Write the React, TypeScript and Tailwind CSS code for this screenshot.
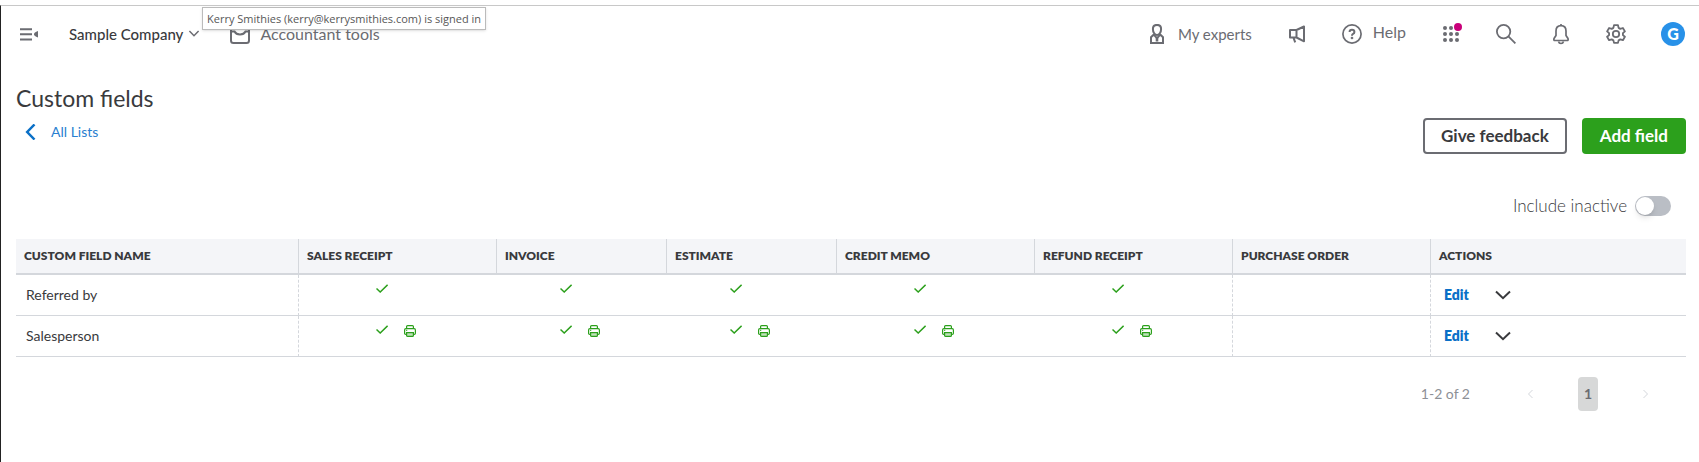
import { useState } from 'react';
import clsx from 'clsx';

const columns = [
  { key: 'salesReceipt', label: 'SALES RECEIPT', width: 'w-[198px]' },
  { key: 'invoice', label: 'INVOICE', width: 'w-[170px]' },
  { key: 'estimate', label: 'ESTIMATE', width: 'w-[170px]' },
  { key: 'creditMemo', label: 'CREDIT MEMO', width: 'w-[198px]' },
  { key: 'refundReceipt', label: 'REFUND RECEIPT', width: 'w-[198px]' },
  { key: 'purchaseOrder', label: 'PURCHASE ORDER', width: 'w-[198px]' },
];

const salesForms = ['salesReceipt', 'invoice', 'estimate', 'creditMemo', 'refundReceipt'];

const fields = [
  { name: 'Referred by', forms: salesForms, printed: false },
  { name: 'Salesperson', forms: salesForms, printed: true },
];

function CheckIcon() {
  return (
    <svg viewBox="0 0 12 9" className="w-3 h-[9px]" fill="none" stroke="currentColor" strokeWidth="1.5">
      <path d="M.5 4.5 4.2 8 11.6.8" />
    </svg>
  );
}

function PrinterIcon() {
  return (
    <svg viewBox="0 0 12 12" className="w-3 h-3" fill="none" stroke="currentColor" strokeWidth="1.2">
      <path d="M2.6 3.6V1.6q0-1 1-1h4.8q1 0 1 1v2" />
      <path d="M2.6 9.4h-.8Q.6 9.4.6 8.2V5q0-1.3 1.3-1.3h8.2q1.3 0 1.3 1.3v3.2q0 1.2-1.2 1.2h-.8" />
      <path d="M2.6 7.6h6.8v2.8q0 1-1 1H3.6q-1 0-1-1z" fill="currentColor" fillOpacity=".3" />
      <path d="M2.2 5.4h1" />
    </svg>
  );
}

function Chevron({ d, className }: { d: string; className: string }) {
  return (
    <svg viewBox="0 0 16 16" className={className} fill="none" stroke="currentColor">
      <path d={d} />
    </svg>
  );
}

function Header() {
  return (
    <header className="flex items-center h-14 pl-[19px] pr-[14px] text-[#6b6c72]">
      <button aria-label="Collapse menu" className="mr-[30px]">
        <svg viewBox="0 0 19 13" className="w-[19px] h-[13px]" fill="currentColor">
          <path d="M0 .2h12v2H0zM0 5.2h12v2H0zM0 10.4h12v2H0z" />
          <path d="M18 3v6.4q-4-1.4-4-3.2T18 3z" />
        </svg>
      </button>
      <button className="flex items-center gap-[3px] text-[15px] text-[#393a3d] font-medium">
        Sample Company
        <Chevron d="M3.4 5 8 9.7 12.6 5" className="w-4 h-4 text-[#6b6c72] stroke-[1.5]" />
      </button>
      <a href="#tools" className="flex items-center gap-[10px] ml-7">
        <svg viewBox="0 0 20 20" className="w-5 h-5" fill="none" stroke="currentColor" strokeWidth="2">
          <rect x="1" y="1" width="18" height="18" rx="2.5" />
          <path d="M1 7.5h3.5Q6 10.5 10 10.5t5.5-3H19" />
        </svg>
        Accountant tools
      </a>

      <nav className="flex items-center gap-[35px] ml-auto">
        <a href="#experts" className="flex items-center gap-[14px] text-[15px]">
          <svg viewBox="0 0 14 20" className="w-[14px] h-5" fill="none" stroke="currentColor" strokeWidth="2">
            <path d="M4.2 9.4Q2.9 7.8 2.9 5q0-4.1 4.1-4.1T11.1 5q0 2.8-1.3 4.4Q8.600 11 7 11t-2.800-1.600z" />
            <path d="M3.8 10.5 1 13.2V19h12v-5.8l-2.8-2.7M3.8 10.5 7 14.3l3.2-3.8" />
            <path d="M7 13.5v4" strokeWidth="2.6" />
          </svg>
          My experts
        </a>
        <button aria-label="What's new">
          <svg viewBox="0 0 20 20" className="w-5 h-5" fill="none" stroke="currentColor" strokeWidth="2" strokeLinejoin="round">
            <path d="M3 6h6.5v7.5H3zM9.5 6l7.500-3.500v14.800l-7.500-3.800M6.400 13.500l1.800 4.800" />
          </svg>
        </button>
        <a href="#help" className="flex items-center gap-[11px]">
          <svg viewBox="0 0 20 20" className="w-5 h-5" fill="none" stroke="currentColor" strokeWidth="1.7">
            <circle cx="10" cy="10" r="9.1" />
            <path d="M7.6 8q0-2.3 2.4-2.3T12.400 8q0 1.300-1.300 1.900-1.100.5-1.100 1.800" strokeWidth="2" />
            <circle cx="10" cy="14" r=".5" />
          </svg>
          <span className="pb-1">Help</span>
        </a>
        <button aria-label="Apps" className="relative">
          <svg viewBox="0 0 20 20" className="w-5 h-5" fill="currentColor">
            {[4, 10, 16].map((y) => [4, 10, 16].map((x) => <circle key={`${x}-${y}`} cx={x} cy={y} r="2" />))}
          </svg>
          <span className="absolute -top-px -right-px w-2 h-2 rounded-full bg-[#c9007a]" />
        </button>
        <button aria-label="Search">
          <svg viewBox="0 0 20 20" className="w-5 h-5" fill="none" stroke="currentColor" strokeWidth="1.8">
            <circle cx="7.6" cy="7.6" r="6.7" />
            <path d="m12.4 12.4 7 7" />
          </svg>
        </button>
        <button aria-label="Notifications">
          <svg viewBox="0 0 20 22" className="w-5 h-[22px]" fill="none" stroke="currentColor" strokeWidth="1.7" strokeLinejoin="round">
            <path d="M10 1v1.5M10 2.6q-5 0-5 5.4v4.5L3 15.5q-.6 2 1 2h12q1.6 0 1-2l-2-3V8q0-5.4-5-5.4z" />
            <path d="M7.5 18.5q.5 2 2.5 2t2.5-2" />
          </svg>
        </button>
        <button aria-label="Settings">
          <svg viewBox="0 0 20 20" className="w-5 h-5" fill="none" stroke="currentColor" strokeWidth="1.8" strokeLinejoin="round">
            <path d="M8 1.2h4l.6 2.7 1.7 1 2.6-.9 2 3.4-2 1.800v1.900l2 1.700-2 3.400-2.600-.8-1.700 1-.6 2.500H8l-.6-2.500-1.700-1-2.600.8-2-3.400 2-1.700V9.200l-2-1.800 2-3.400 2.600.9 1.700-1z" />
            <circle cx="10" cy="10" r="3.2" />
          </svg>
        </button>
        <button aria-label="Account" className="w-6 h-6 rounded-full bg-[#2891e8] text-white text-base font-black leading-6">
          G
        </button>
      </nav>
    </header>
  );
}

function FieldsTable() {
  return (
    <table className="w-full table-fixed border-separate border-spacing-0 text-left">
      <thead>
        <tr className="h-9 bg-[#f4f5f8] text-xs text-[#393a3d]">
          <th className="w-[283px] px-2 border-r border-b-2 border-[#d4d7dc] font-extrabold">CUSTOM FIELD NAME</th>
          {columns.map((col) => (
            <th key={col.key} className={clsx('px-2 border-r border-b-2 border-[#d4d7dc] font-extrabold', col.width)}>
              {col.label}
            </th>
          ))}
          <th className="px-2 border-b-2 border-[#d4d7dc] font-extrabold">ACTIONS</th>
        </tr>
      </thead>
      <tbody>
        {fields.map((field) => (
          <tr key={field.name} className="h-[41px] text-sm text-[#393a3d]">
            <td className="px-[10px] border-b border-r border-[#d4d7dc] [border-right-style:dashed]">{field.name}</td>
            {columns.map((col) => (
              <td
                key={col.key}
                className={clsx(
                  'pt-[9px] pr-1 align-top border-b border-[#d4d7dc]',
                  (col.key === 'refundReceipt' || col.key === 'purchaseOrder') && 'border-r [border-right-style:dashed]',
                )}
              >
                {field.forms.includes(col.key) && (
                  <div className="flex justify-center gap-4 text-[#2ca01c]">
                    <CheckIcon />
                    <span className={clsx('w-3', !field.printed && 'invisible')}>
                      <PrinterIcon />
                    </span>
                  </div>
                )}
              </td>
            ))}
            <td className="px-[13px] border-b border-[#d4d7dc]">
              <div className="flex items-center gap-[26px]">
                <button className="font-extrabold text-[#0a70c7]">Edit</button>
                <button aria-label={`More actions for ${field.name}`}>
                  <Chevron d="M1 4.5 8 11.2l7-6.7" className="w-4 h-4 stroke-2" />
                </button>
              </div>
            </td>
          </tr>
        ))}
      </tbody>
    </table>
  );
}

export default function App() {
  const [inactive, setInactive] = useState(false);

  return (
    <div className="relative flex flex-col min-h-screen pt-[5px] bg-white font-[Lato,sans-serif] text-base">
      <div className="flex-1 border-t border-t-[#c8c8c8] border-l border-l-[#222]">
        <Header />

        <main className="pl-[15px] pr-[13px]">
          <div className="flex justify-between pt-5">
            <div>
              <h1 className="text-[23px] leading-8 text-[#393a3d]">Custom fields</h1>
              <a href="#lists" className="flex items-center gap-3 mt-2 ml-[7px] text-sm text-[#2a7fd0]">
                <Chevron d="M11.5.5 4.2 8l7.3 7.5" className="w-4 h-4 stroke-[2.5] text-[#0a70c7]" />
                All Lists
              </a>
            </div>
            <div className="flex gap-[15px] mt-9 text-[17px] font-bold">
              <button className="h-9 px-4 border-2 border-[#6b6c72] rounded text-[#393a3d]">Give feedback</button>
              <button className="h-9 px-[18px] rounded bg-[#2ca01c] text-white">Add field</button>
            </div>
          </div>

          <label className="flex items-center justify-end gap-2 mt-10 mr-[15px] h-6 text-[17px] font-light text-[#393a3d]">
            Include inactive
            <input
              type="checkbox"
              role="switch"
              checked={inactive}
              onChange={() => setInactive(!inactive)}
              className="appearance-none w-9 h-5 rounded-full bg-[#babec5] p-px before:block before:w-[18px] before:h-[18px] before:rounded-full before:bg-white before:shadow-md checked:bg-[#2ca01c] checked:before:ml-4"
            />
          </label>

          <div className="mt-[21px]">
            <FieldsTable />
          </div>

          <div className="flex items-center justify-end mt-5 pr-8 text-sm text-[#8d9096]">
            <span>1-2 of 2</span>
            <button aria-label="Previous page" disabled className="ml-[52px] text-[#d4d7dc]">
              <Chevron d="M10.5 4 6.5 8l4 4" className="w-4 h-4" />
            </button>
            <button className="w-5 h-[34px] mx-10 rounded bg-[#d7d8d8] font-bold text-[#6b6c72]">1</button>
            <button aria-label="Next page" disabled className="text-[#d4d7dc]">
              <Chevron d="m5.5 4 4 4-4 4" className="w-4 h-4" />
            </button>
          </div>
        </main>
      </div>

      <div
        role="tooltip"
        className="absolute top-[7px] left-[202px] h-[23px] px-1 border border-[#bbb] bg-white shadow font-[Open_Sans,sans-serif] text-[11px] leading-[21px] text-[#575757] whitespace-nowrap"
      >
        Kerry Smithies (kerry@kerrysmithies.com) is signed in
      </div>
    </div>
  );
}
